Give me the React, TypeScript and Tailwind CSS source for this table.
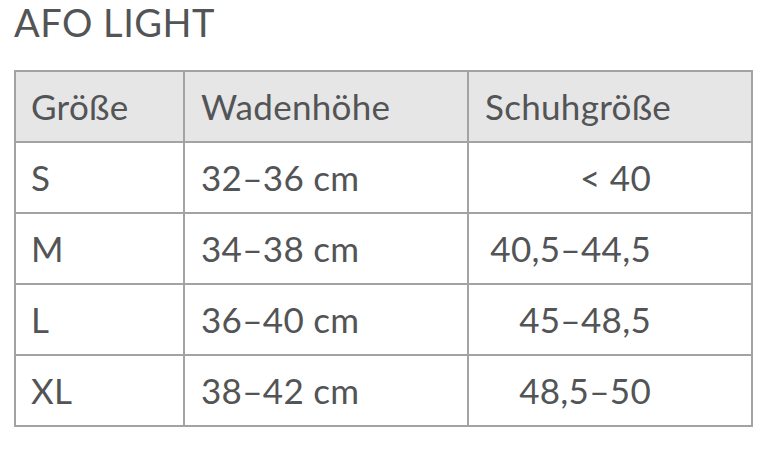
const rows = [
  { size: 'S', calf: '32–36 cm', shoe: '< 40' },
  { size: 'M', calf: '34–38 cm', shoe: '40,5–44,5' },
  { size: 'L', calf: '36–40 cm', shoe: '45–48,5' },
  { size: 'XL', calf: '38–42 cm', shoe: '48,5–50' },
];

export default function App() {
  return (
    <div className="w-[780px] h-[461px] bg-white text-[#525456]" style={{ fontFamily: 'Lato, "Open Sans", sans-serif' }}>
      <h1 className="pl-[14px] text-[38px] leading-[44px] tracking-[0.5px]">AFO LIGHT</h1>
      <table className="ml-[14px] mt-[26px] border-collapse text-[35px] tracking-[0.3px]">
        <thead>
          <tr className="bg-[#e6e6e6] h-[71px]">
            <th className="w-[169px] border-2 border-[#a3a3a3] pl-[15px] text-left font-normal">Größe</th>
            <th className="w-[284px] border-2 border-[#a3a3a3] pl-[16px] text-left font-normal">Wadenhöhe</th>
            <th className="w-[284px] border-2 border-[#a3a3a3] pl-[16px] text-left font-normal">Schuhgröße</th>
          </tr>
        </thead>
        <tbody>
          {rows.map((r) => (
            <tr key={r.size} className="h-[71px]">
              <td className="border-2 border-[#a3a3a3] pl-[15px]">{r.size}</td>
              <td className="border-2 border-[#a3a3a3] pl-[16px]">{r.calf}</td>
              <td className="border-2 border-[#a3a3a3] pr-[100px] text-right">{r.shoe}</td>
            </tr>
          ))}
        </tbody>
      </table>
    </div>
  );
}
